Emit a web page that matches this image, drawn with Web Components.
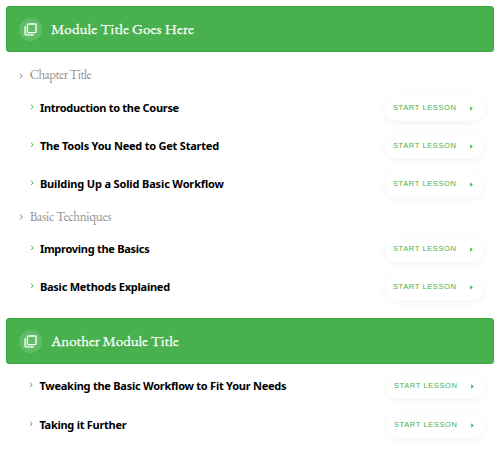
<!DOCTYPE html>
<html lang="en"><head><meta charset="utf-8"><title>Course outline</title>
<style>
html,body{margin:0;background:#fff}
body{width:500px;height:455px;overflow:hidden}
</style></head><body>
<course-outline>
<module-section>
<module-banner slot="head" width="143">Module Title Goes Here</module-banner>
<chapter-title width="61.5">Chapter Title</chapter-title>
<lesson-row width="139">Introduction to the Course</lesson-row>
<lesson-row width="179">The Tools You Need to Get Started</lesson-row>
<lesson-row width="184">Building Up a Solid Basic Workflow</lesson-row>
<chapter-title width="81.5">Basic Techniques</chapter-title>
<lesson-row width="109.5">Improving the Basics</lesson-row>
<lesson-row width="130">Basic Methods Explained</lesson-row>
</module-section>
<module-section style="--top:3px;--lead:23px;--inset:9.5px">
<module-banner slot="head" width="127.5">Another Module Title</module-banner>
<lesson-row width="247">Tweaking the Basic Workflow to Fit Your Needs</lesson-row>
<lesson-row width="87">Taking it Further</lesson-row>
</module-section>
</course-outline>
<script>
class Part extends HTMLElement{
  constructor(){
    super();
    this.attachShadow({mode:'open'}).innerHTML=this.constructor.markup;
  }
}
/* A label whose tracking is adjusted so the line takes the requested width. */
class FittedPart extends Part{
  connectedCallback(){
    const label=this.shadowRoot.querySelector('.label');
    const target=parseFloat(this.getAttribute('width'));
    const count=this.textContent.trim().length;
    if(target) label.style.letterSpacing=(target-label.getBoundingClientRect().width)/count+'px';
  }
}
customElements.define('course-outline',class extends Part{
  static markup=`<style>:host{display:flex;flex-direction:column;gap:11.5px;padding:6px 6px 0;box-sizing:border-box}</style><slot></slot>`;
});
customElements.define('module-section',class extends Part{
  static markup=`<style>:host{display:block}.list{display:flex;flex-direction:column;padding:var(--top,10px) 0 0}</style><slot name="head"></slot><div class="list"><slot></slot></div>`;
});
customElements.define('module-banner',class extends FittedPart{
  static markup=`<style>
  :host{display:flex;align-items:center;box-sizing:border-box;height:46px;padding-left:12px;border:1px solid #39a940;border-radius:3px;background:#48b14e;color:#fff}
  .disc{width:23px;height:23px;border-radius:50%;background:#61bc66;display:grid;place-items:center;margin-right:9px;flex:none}
  svg{display:block}
  .label{margin-top:-1px;font:400 15px/20px "EB Garamond","Liberation Serif",serif;white-space:nowrap;-webkit-text-stroke:.25px #fff}
  </style><span class="disc"><svg width="13" height="13" viewBox="0 0 13 13" fill="none" stroke="#fff" stroke-width="1.35"><rect x="3.4" y="1" width="8.6" height="8.6" rx=".8"/><path d="M1.1 3.2v7.9q0 .8.8.8h8"/></svg></span><span class="label"><slot></slot></span>`;
});
customElements.define('chapter-title',class extends FittedPart{
  static markup=`<style>
  :host{display:flex;align-items:center;height:26.5px;padding-left:12.7px;color:#8f8f8f}
  svg{margin:1px 6px 0 0;flex:none}
  .label{font:13px/18px "EB Garamond","Liberation Serif",serif;white-space:nowrap}
  </style><svg width="5" height="6" viewBox="0 0 5 6" fill="none" stroke="#777" stroke-width=".9"><path d="M1.1.8 3.4 3 1.1 5.2"/></svg><span class="label"><slot></slot></span>`;
});
customElements.define('start-button',class extends FittedPart{
  static markup=`<style>
  :host{display:flex;align-items:center;box-sizing:border-box;width:99px;height:26px;border-radius:13px;background:#fff;box-shadow:0 2px 9px rgba(0,0,0,.05);padding:0 11px 0 8.5px;justify-content:space-between;color:#48b14e}
  .label{font:7.5px/12px "Liberation Sans",sans-serif;white-space:nowrap}
  svg{flex:none;margin-top:1px}
  </style><span class="label"><slot></slot></span><svg width="3" height="5" viewBox="0 0 3 5" fill="#48b14e"><path d="M.2.2 2.8 2.5.2 4.8z"/></svg>`;
});
customElements.define('lesson-row',class extends FittedPart{
  static markup=`<style>
  :host{display:flex;align-items:center;height:38.33px;padding:0 var(--inset,10.5px) 0 var(--lead,23.5px);color:#000}
  .lead{display:flex;align-items:center;flex:1;min-width:0}
  svg{margin:-2px 5.4px 0 0;flex:none}
  .label{font:700 11px/18px "Noto Sans","Open Sans",sans-serif;white-space:nowrap}
  </style><div class="lead"><svg width="5" height="6" viewBox="0 0 5 6" fill="none" stroke="#48b14e" stroke-width="1"><path d="M1.1.8 3.2 2.8 1.1 4.8"/></svg><span class="label"><slot></slot></span></div><start-button width="63.5">START LESSON</start-button>`;
});
</script>
</body></html>
